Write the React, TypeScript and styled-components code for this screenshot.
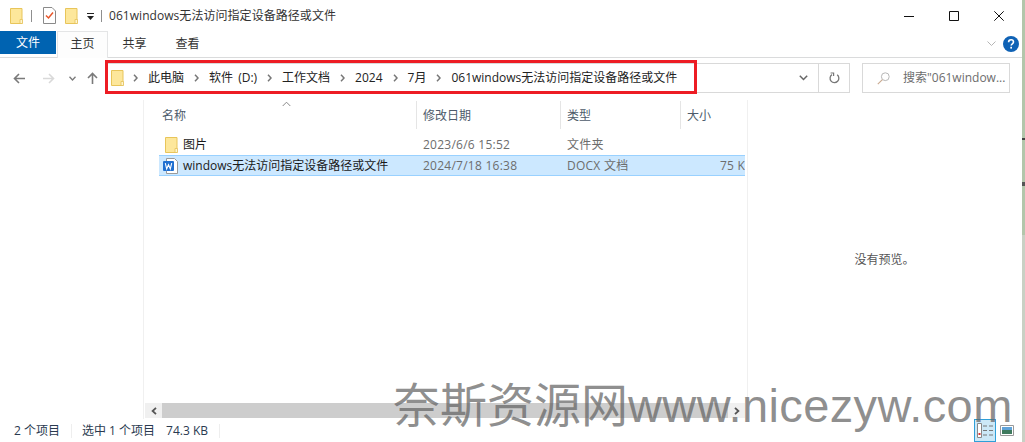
import React from 'react'
import styled, { createGlobalStyle } from 'styled-components'

const Global = createGlobalStyle`
  html, body {
    margin: 0;
    padding: 0;
    background: #fff;
    overflow: hidden;
  }
  * {
    box-sizing: border-box;
  }
`

const Page = styled.div`
  width: 1025px;
  height: 442px;
  display: flex;
  position: relative;
  overflow: hidden;
  font: normal 12px/16px 'Open Sans', 'Noto Sans CJK SC', sans-serif;
  color: #1a1a1a;
`

const Strip = styled.div`
  width: 3px;
  background: linear-gradient(
    #b3c6ab 0,
    #b3c6ab 138px,
    #444 138px,
    #444 140px,
    #b3c6ab 140px,
    #b3c6ab 182px,
    #555 182px,
    #555 186px,
    #b3c6ab 186px,
    #b3c6ab 235px,
    #c9d0c4 235px,
    #c9d0c4 100%
  );
`

const Win = styled.div`
  flex: 1;
  min-width: 0;
  display: flex;
  flex-direction: column;
`

const TitleBar = styled.div`
  height: 31px;
  display: flex;
  align-items: center;
  padding-left: 10px;
`

const TitleSep = styled.div<{ $left: number; $right: number }>`
  width: 1px;
  height: 12px;
  background: #8f8f8f;
  margin: 0 ${p => p.$right}px 0 ${p => p.$left}px;
`

const TitleGap = styled.span`
  width: 9px;
`

const TitleDrop = styled.svg`
  width: 9px;
  height: 8px;
  margin: 2px 0 0 8px;
`

const TitleText = styled.div`
  color: #333;
  letter-spacing: 0.05px;
`

const WinControls = styled.div`
  margin-left: auto;
  display: flex;
  align-items: center;
  padding-right: 18px;
  gap: 35px;
  svg {
    display: block;
  }
`

const Ribbon = styled.div`
  height: 27px;
  display: flex;
  align-items: flex-start;
  border-bottom: 1px solid #dadbdc;
  position: relative;
`

const FileTab = styled.div`
  width: 56px;
  height: 23px;
  background: #0063b1;
  color: #fff;
  text-align: center;
  line-height: 24px;
`

const Tab = styled.div<{ $active?: boolean }>`
  width: ${p => (p.$active ? '51px' : '53px')};
  height: 27px;
  text-align: center;
  line-height: 24px;
  color: #333;
  background: ${p => (p.$active ? '#fdfdfd' : 'transparent')};
  border: 1px solid ${p => (p.$active ? '#e4e5e6' : 'transparent')};
  border-bottom: none;
  margin-left: ${p => (p.$active ? '1px' : '0')};
`

const RibbonRight = styled.div`
  margin-left: auto;
  height: 26px;
  display: flex;
  align-items: center;
  gap: 7px;
  padding: 0 3px 0 0;
`

const NavRow = styled.div`
  height: 42px;
  position: relative;
  display: flex;
  align-items: flex-start;
  padding: 5px 12px 0 13px;
`

const NavButtons = styled.div`
  width: 93px;
  height: 30px;
  display: flex;
  align-items: center;
  svg {
    display: block;
  }
`

const NavIcon = styled.svg<{ $left: number }>`
  margin-left: ${p => p.$left}px;
`

const AddressBar = styled.div`
  width: 744px;
  height: 30px;
  border: 1px solid #d9d9d9;
  display: flex;
  align-items: center;
  padding-left: 4px;
`

const Crumbs = styled.div`
  flex: 1;
  display: flex;
  align-items: center;
  gap: 10px;
  color: #222;
  white-space: nowrap;
  word-spacing: 2px;
`

const CrumbFolder = styled.div`
  margin-right: -1px;
  display: flex;
`

const CrumbArrow = styled.svg`
  width: 5px;
  height: 8px;
  display: block;
`

const AddressTail = styled.div`
  width: 31px;
  height: 28px;
  display: flex;
  align-items: center;
  justify-content: center;
  border-left: 1px solid #d9d9d9;
`

const AddressDrop = styled.div`
  width: 30px;
  display: flex;
  justify-content: center;
`

const SearchBox = styled.div`
  width: 148px;
  height: 30px;
  margin-left: 12px;
  border: 1px solid #d9d9d9;
  display: flex;
  align-items: center;
  padding-left: 14px;
  gap: 13px;
  color: #6d6d6d;
  white-space: nowrap;
`

const RedFrame = styled.div`
  position: absolute;
  left: 105px;
  top: 2px;
  width: 592px;
  height: 34px;
  border: 3px solid #ed1c24;
`

const Body = styled.div`
  flex: 1;
  min-height: 0;
  display: flex;
`

const NavPane = styled.div`
  width: 144px;
  border-right: 1px solid #f0f0f0;
`

const ListPane = styled.div`
  width: 604px;
  display: flex;
  flex-direction: column;
  border-right: 1px solid #f0f0f0;
  padding-right: 2px;
  position: relative;
`

const Cols = styled.div`
  display: grid;
  grid-template-columns: 257px 144px 120px 65px;
  margin-left: 15px;
`

const HeaderRow = styled(Cols)`
  height: 28px;
  margin-bottom: 6px;
  color: #4d5b6b;
`

const HeadCell = styled.div<{ $first?: boolean }>`
  border-left: ${p => (p.$first ? 'none' : '1px solid #e5e5e5')};
  padding: 6px 0 0 ${p => (p.$first ? '3px' : '6px')};
  line-height: 17px;
  height: 28px;
  margin-top: 1px;
`

const SortMark = styled.svg`
  position: absolute;
  left: 138px;
  top: 1px;
  width: 9px;
  height: 6px;
`

const FileRow = styled(Cols)<{ $selected?: boolean }>`
  height: 21px;
  align-items: center;
  background: ${p => (p.$selected ? '#cce8ff' : 'transparent')};
  border-top: 1px solid ${p => (p.$selected ? '#99d1ff' : 'transparent')};
  border-bottom: 1px solid ${p => (p.$selected ? '#99d1ff' : 'transparent')};
`

const NameCell = styled.div<{ $pad: number }>`
  display: flex;
  align-items: center;
  gap: 5px;
  padding-left: ${p => p.$pad}px;
  color: #1a1a1a;
  white-space: nowrap;
  svg {
    display: block;
    flex: none;
  }
`

const InfoCell = styled.div<{ $clip?: boolean }>`
  color: #6d6d6d;
  padding-left: ${p => (p.$clip ? '40px' : '7px')};
  white-space: nowrap;
  overflow: hidden;
  letter-spacing: 0.25px;
`

const Spacer = styled.div`
  flex: 1;
`

const HScroll = styled.div`
  height: 15px;
  margin: 0 0 1px 1px;
  background: #f0f0f0;
  display: flex;
  align-items: center;
`

const ScrollEnd = styled.div`
  width: 17px;
  height: 15px;
  display: flex;
  align-items: center;
  justify-content: center;
  flex: none;
`

const ScrollThumb = styled.div`
  flex: 1;
  height: 15px;
  background: #cdcdcd;
`

const PreviewPane = styled.div`
  flex: 1;
  display: flex;
  align-items: center;
  justify-content: center;
  padding-right: 1px;
  color: #555;
`

const StatusBar = styled.div`
  height: 23px;
  display: flex;
  align-items: center;
  padding-left: 14px;
  color: #2a3a50;
  position: relative;
  white-space: nowrap;
`

const StatusSep = styled.div`
  width: 1px;
  height: 14px;
  background: #eeeeee;
  margin: 0 10px 0 11px;
`

const StatusSize = styled.span`
  margin-left: 11px;
`

const ViewButtons = styled.div`
  margin-left: auto;
  display: flex;
  align-items: center;
  height: 23px;
  padding-right: 8px;
  gap: 4px;
`

const ViewBtn = styled.div<{ $active?: boolean }>`
  width: ${p => (p.$active ? '22px' : '14px')};
  height: 23px;
  display: flex;
  align-items: center;
  justify-content: center;
  background: ${p => (p.$active ? '#cce8f7' : 'transparent')};
  border: ${p => (p.$active ? '1px solid #2f9fd8' : 'none')};
`

const Watermark = styled.div`
  position: absolute;
  left: 393px;
  top: 376px;
  font: normal 47px/60px 'Liberation Sans', 'Noto Sans CJK SC', sans-serif;
  color: rgba(100, 100, 100, 0.72);
  white-space: nowrap;
  pointer-events: none;
`

const WatermarkUrl = styled.span`
  letter-spacing: 0.4px;
`

const Folder = () => (
  <svg width='13' height='16' viewBox='0 0 13 16'>
    <path d='M.5.5h11.5v15H.5z' fill='#fde79b' stroke='#e8c55a' />
    <path d='M10 15.5v-4h2.500v4z' fill='#fff6cf' stroke='#e5c25a' strokeWidth='.8' />
  </svg>
)

const Chevron = () => (
  <CrumbArrow viewBox='0 0 5 8'>
    <path d='M1 .8 4 4 1 7.2' fill='none' stroke='#777' strokeWidth='1.5' />
  </CrumbArrow>
)

const crumbs = ['此电脑', '软件 (D:)', '工作文档', '2024', '7月', '061windows无法访问指定设备路径或文件']

export default function App() {
  return (
    <Page>
      <Global />
      <Win>
        <TitleBar>
          <Folder />
          <TitleSep $left={8} $right={11} />
          <svg width='13' height='17' viewBox='0 0 13 17'>
            <path d='M.5.5H9L12.5 4v12.500H.5z' fill='#fff' stroke='#8a8a8a' />
            <path d='M3 8.500 5.500 11 10 5.500' fill='none' stroke='#e8562a' strokeWidth='1.500' />
          </svg>
          <TitleGap />
          <Folder />
          <TitleDrop viewBox='0 0 9 8'>
            <path d='M1 .5h7' stroke='#222' />
            <path d='M1 3h7L4.500 7z' fill='#222' />
          </TitleDrop>
          <TitleSep $left={6} $right={7} />
          <TitleText>061windows无法访问指定设备路径或文件</TitleText>
          <WinControls>
            <svg width='10' height='10' viewBox='0 0 10 10'>
              <path d='M0 5.500h10' stroke='#111' />
            </svg>
            <svg width='10' height='10' viewBox='0 0 10 10'>
              <path d='M.5.5h9v9h-9z' fill='none' stroke='#111' />
            </svg>
            <svg width='10' height='10' viewBox='0 0 10 10'>
              <path d='M.3.3l9.4 9.4M9.7.3.3 9.7' stroke='#111' fill='none' />
            </svg>
          </WinControls>
        </TitleBar>
        <Ribbon>
          <FileTab>文件</FileTab>
          <Tab $active>主页</Tab>
          <Tab>共享</Tab>
          <Tab>查看</Tab>
          <RibbonRight>
            <svg width='9' height='6' viewBox='0 0 9 6'>
              <path d='M.5.5l4 4 4-4' fill='none' stroke='#b5b5b5' />
            </svg>
            <svg width='16' height='16' viewBox='0 0 16 16'>
              <circle cx='8' cy='8' r='8' fill='#0f62b5' />
              <path
                d='M5.600 6.200c0-1.500 1.100-2.400 2.500-2.400s2.400.8 2.400 2.100c0 1.900-2.300 1.900-2.300 3.700'
                fill='none'
                stroke='#fff'
                strokeWidth='1.600'
              />
              <rect x='7.300' y='10.800' width='1.700' height='1.800' fill='#fff' />
            </svg>
          </RibbonRight>
        </Ribbon>
        <NavRow>
          <NavButtons>
            <NavIcon $left={0} width='12' height='11' viewBox='0 0 12 11'>
              <path d='M12 5.500H1.500M6 1 1.500 5.500 6 10' fill='none' stroke='#7a7a7a' strokeWidth='1.600' />
            </NavIcon>
            <NavIcon $left={18} width='12' height='11' viewBox='0 0 12 11'>
              <path d='M0 5.500h10.500M6 1l4.500 4.500L6 10' fill='none' stroke='#d9d9d9' strokeWidth='1.600' />
            </NavIcon>
            <NavIcon $left={14} width='7' height='5' viewBox='0 0 7 5'>
              <path d='M.5.8 3.500 4 6.500.8' fill='none' stroke='#7a7a7a' strokeWidth='1.300' />
            </NavIcon>
            <NavIcon $left={11} width='11' height='12' viewBox='0 0 11 12'>
              <path d='M5.500 12V1.500M1 6l4.500-4.500L10 6' fill='none' stroke='#7a7a7a' strokeWidth='1.600' />
            </NavIcon>
          </NavButtons>
          <AddressBar>
            <Crumbs>
              <CrumbFolder>
                <Folder />
              </CrumbFolder>
              {crumbs.map(c => (
                <React.Fragment key={c}>
                  <Chevron />
                  <span>{c}</span>
                </React.Fragment>
              ))}
            </Crumbs>
            <AddressDrop>
              <svg width='9' height='6' viewBox='0 0 9 6'>
                <path d='M.8.8l3.700 3.700L8.200.8' fill='none' stroke='#666' strokeWidth='1.500' />
              </svg>
            </AddressDrop>
            <AddressTail>
              <svg width='11' height='12' viewBox='0 0 11 12'>
                <path d='M8.200 2.800A4.400 4.400 0 1 1 3 2.600' fill='none' stroke='#777' strokeWidth='1.300' />
                <path d='M1.600 1h3v3' fill='none' stroke='#777' strokeWidth='1.200' />
              </svg>
            </AddressTail>
          </AddressBar>
          <SearchBox>
            <svg width='13' height='13' viewBox='0 0 13 13'>
              <circle cx='8.300' cy='4.700' r='3.900' fill='none' stroke='#b7b7b7' />
              <path d='M5.400 7.600.8 12.200' stroke='#c9a98f' strokeWidth='1.100' />
            </svg>
            <span>搜索"061window...</span>
          </SearchBox>
          <RedFrame />
        </NavRow>
        <Body>
          <NavPane />
          <ListPane>
            <SortMark viewBox='0 0 9 6'>
              <path d='M.7 5 4.500 1.200 8.300 5' fill='none' stroke='#888' />
            </SortMark>
            <HeaderRow>
              <HeadCell $first>名称</HeadCell>
              <HeadCell>修改日期</HeadCell>
              <HeadCell>类型</HeadCell>
              <HeadCell>大小</HeadCell>
            </HeaderRow>
            <FileRow>
              <NameCell $pad={6}>
                <Folder />
                <span>图片</span>
              </NameCell>
              <InfoCell>2023/6/6 15:52</InfoCell>
              <InfoCell>文件夹</InfoCell>
              <InfoCell />
            </FileRow>
            <FileRow $selected>
              <NameCell $pad={4}>
                <svg width='15' height='16' viewBox='0 0 15 16'>
                  <path d='M3.500.5h8l3 3v12h-11z' fill='#fff' stroke='#9a9a9a' />
                  <rect x='0' y='3' width='11' height='10' rx='1' fill='#1f6fd0' />
                  <path d='M2.300 5.200 3.700 11l1.800-4.400L7.300 11l1.400-5.800' fill='none' stroke='#fff' strokeWidth='1.100' />
                </svg>
                <span>windows无法访问指定设备路径或文件</span>
              </NameCell>
              <InfoCell>2024/7/18 16:38</InfoCell>
              <InfoCell>DOCX 文档</InfoCell>
              <InfoCell $clip>75 KB</InfoCell>
            </FileRow>
            <Spacer />
            <HScroll>
              <ScrollEnd>
                <svg width='6' height='8' viewBox='0 0 6 8'>
                  <path d='M5 .8 1.600 4 5 7.200' fill='none' stroke='#555' strokeWidth='1.800' />
                </svg>
              </ScrollEnd>
              <ScrollThumb />
              <ScrollEnd>
                <svg width='6' height='8' viewBox='0 0 6 8'>
                  <path d='M1 .8 4.400 4 1 7.200' fill='none' stroke='#555' strokeWidth='1.800' />
                </svg>
              </ScrollEnd>
            </HScroll>
          </ListPane>
          <PreviewPane>没有预览。</PreviewPane>
        </Body>
        <StatusBar>
          <span>2 个项目</span>
          <StatusSep />
          <span>选中 1 个项目</span>
          <StatusSize>74.3 KB</StatusSize>
          <StatusSep />
          <ViewButtons>
            <ViewBtn $active>
              <svg width='16' height='15' viewBox='0 0 16 15'>
                <path d='M.5.5h4v14h-4z' fill='#fff' stroke='#888' />
                <rect x='1.500' y='10' width='2' height='2' fill='#d33' />
                <path d='M6 3h4M12 3h4M6 7.500h4M12 7.500h4M6 12h4M12 12h4' stroke='#777' />
              </svg>
            </ViewBtn>
            <ViewBtn>
              <svg width='14' height='11' viewBox='0 0 14 11'>
                <path d='M.5.5h13v10H.5z' fill='#fff' stroke='#999' />
                <rect x='2' y='2' width='10' height='3' fill='#5fa3d9' />
                <rect x='2' y='5' width='10' height='4' fill='#3f7a5e' />
              </svg>
            </ViewBtn>
          </ViewButtons>
        </StatusBar>
      </Win>
      <Strip />
      <Watermark>
        奈斯资源网<WatermarkUrl>www.nicezyw.com</WatermarkUrl>
      </Watermark>
    </Page>
  )
}
